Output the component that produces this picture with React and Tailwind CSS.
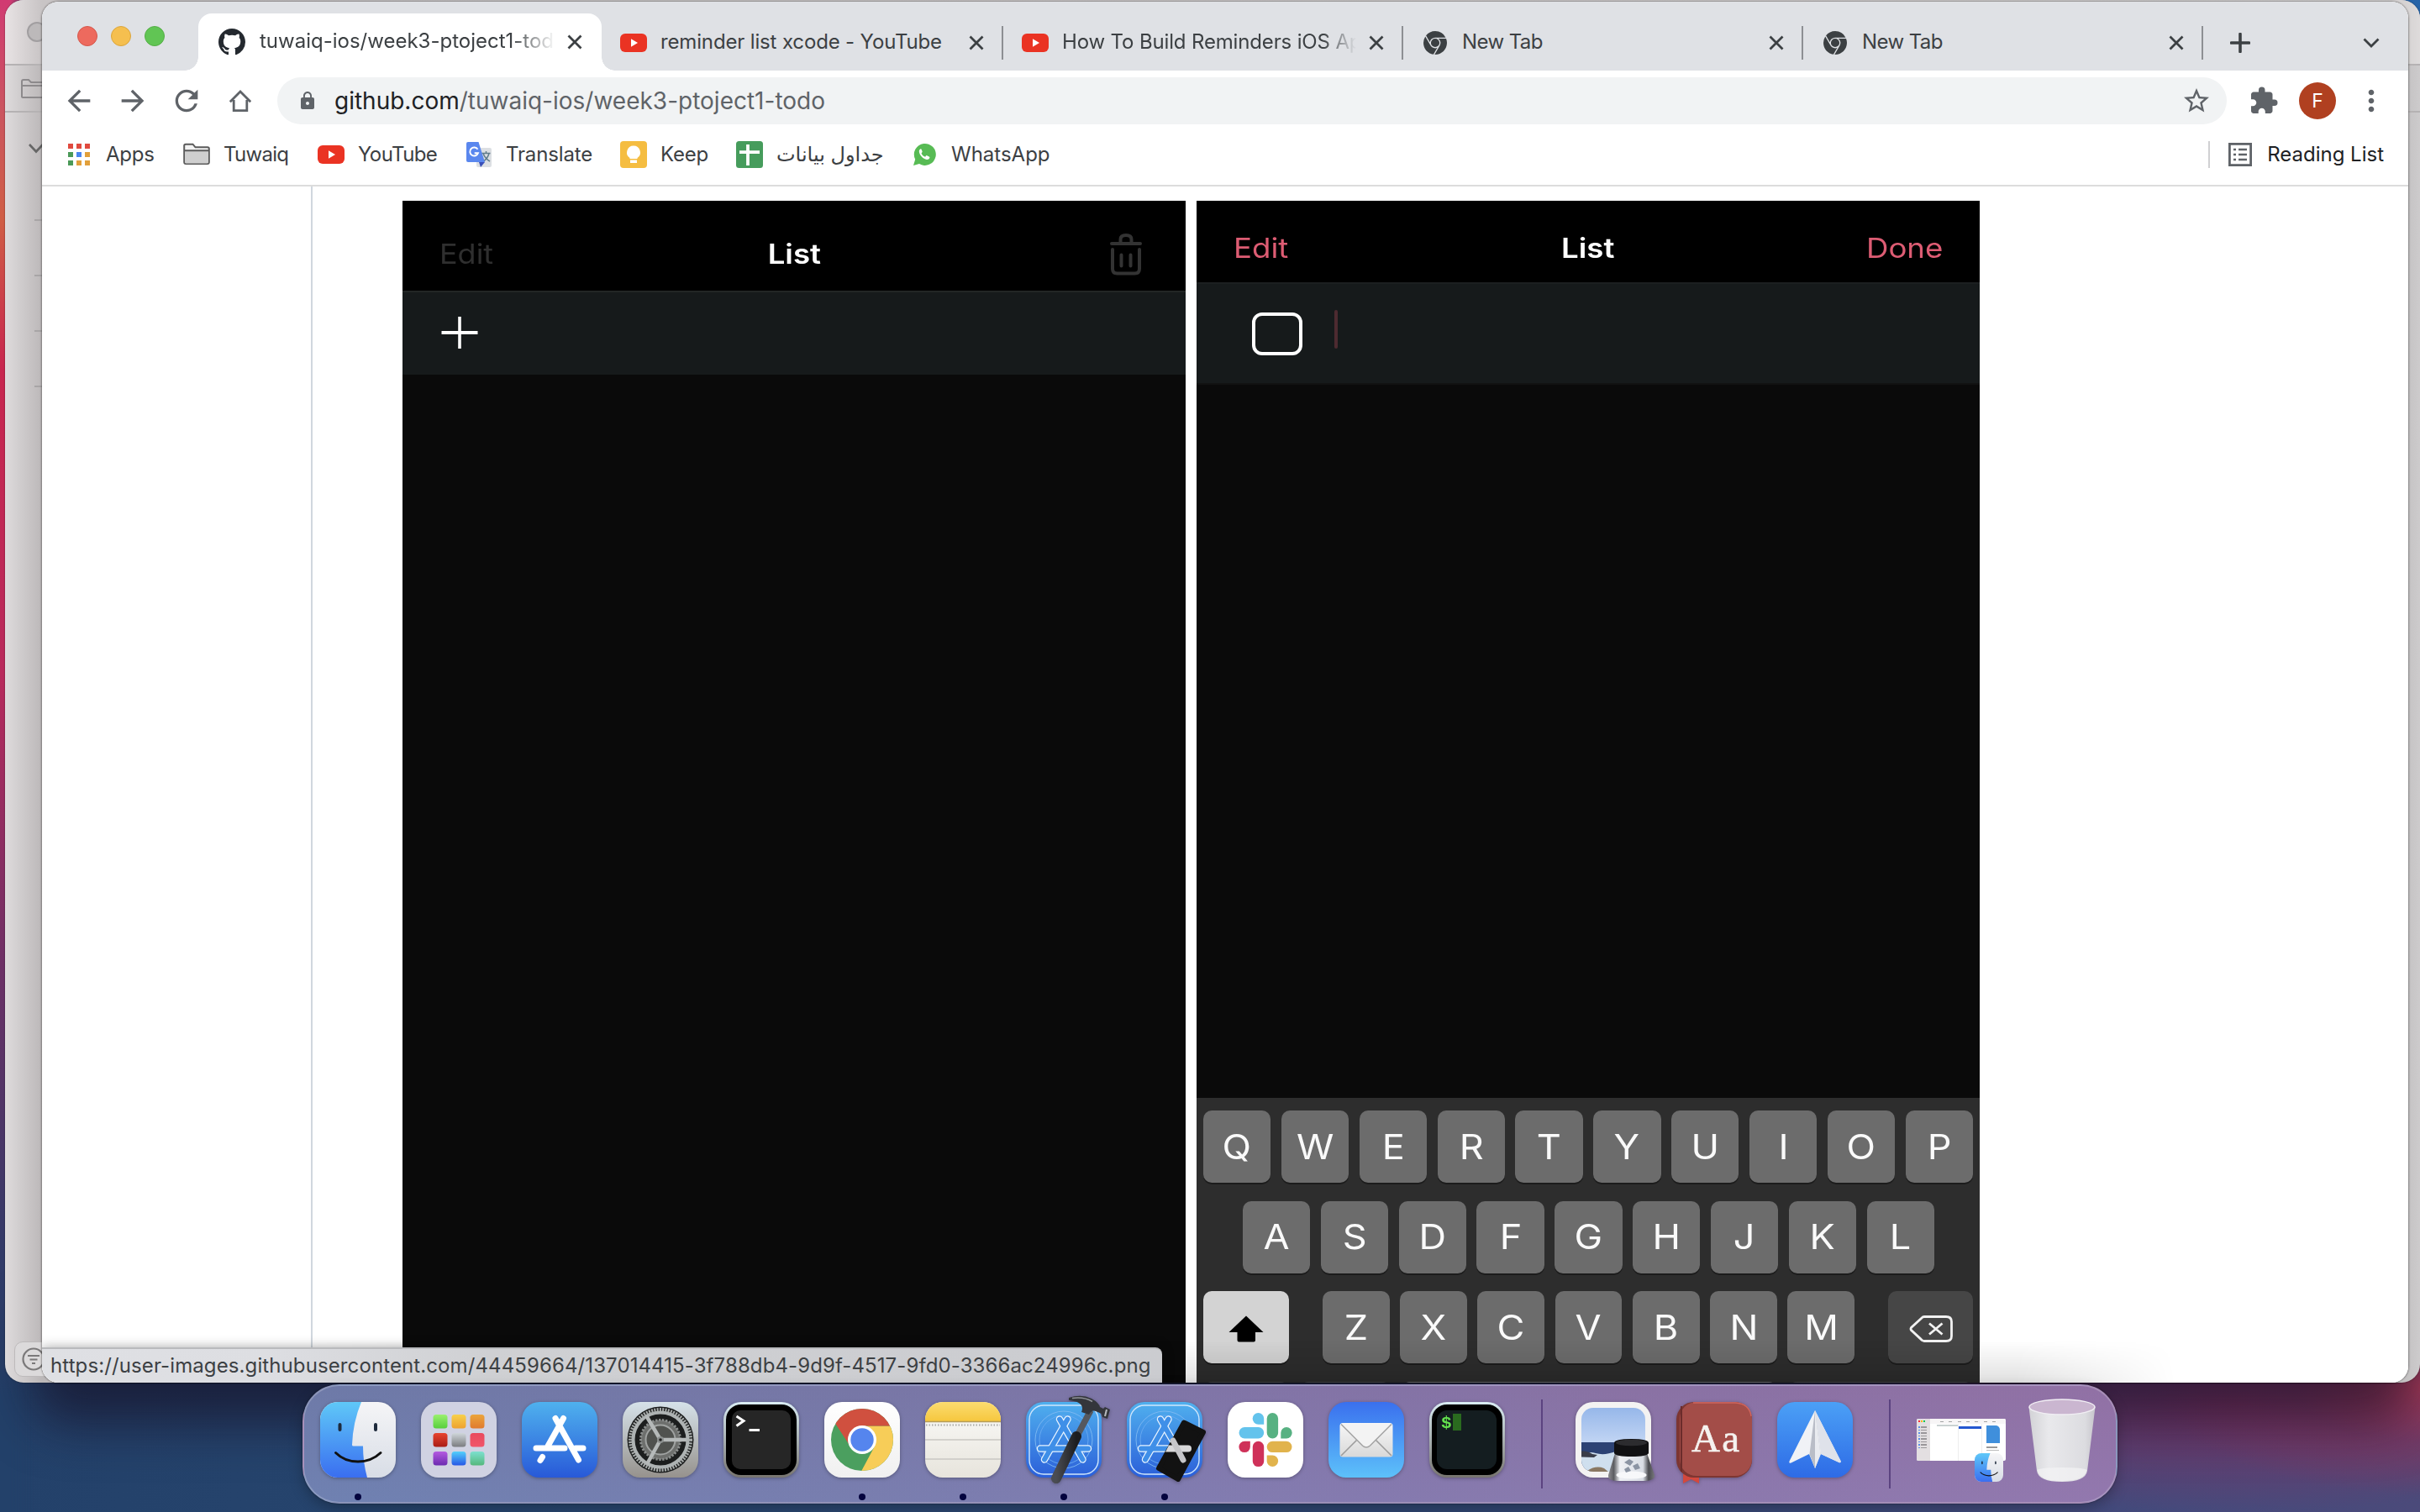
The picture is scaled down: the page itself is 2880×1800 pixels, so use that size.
import React from "react";
import {
  MdArrowBack,
  MdArrowForward,
  MdRefresh,
  MdLock,
  MdStarBorder,
  MdExtension,
  MdMoreVert,
} from "react-icons/md";
import { SiGooglechrome } from "react-icons/si";

/* ---------- small glyphs ---------- */

const GithubMark = () => (
  <svg viewBox="0 0 16 16" className="h-8 w-8" fill="#24292f">
    <path d="M8 0C3.58 0 0 3.58 0 8c0 3.54 2.29 6.53 5.47 7.59.4.07.55-.17.55-.38 0-.19-.01-.82-.01-1.49-2.01.37-2.53-.49-2.69-.94-.09-.23-.48-.94-.82-1.13-.28-.15-.68-.52-.01-.53.63-.01 1.08.58 1.23.82.72 1.21 1.87.87 2.33.66.07-.52.28-.87.51-1.07-1.78-.2-3.64-.89-3.64-3.95 0-.87.31-1.59.82-2.15-.08-.2-.36-1.02.08-2.12 0 0 .67-.21 2.2.82.64-.18 1.32-.27 2-.27.68 0 1.36.09 2 .27 1.53-1.04 2.2-.82 2.2-.82.44 1.1.16 1.92.08 2.12.51.56.82 1.27.82 2.15 0 3.07-1.87 3.75-3.65 3.95.29.25.54.73.54 1.48 0 1.07-.01 1.93-.01 2.2 0 .21.15.46.55.38A8.013 8.013 0 0016 8c0-4.42-3.58-8-8-8z" />
  </svg>
);

const YouTubeMark = () => (
  <svg viewBox="0 0 32 32" className="h-8 w-8">
    <rect y="5" width="32" height="22" rx="6" fill="#ea3323" />
    <path d="M13 11.3v9.4l8-4.7z" fill="#fff" />
  </svg>
);

const CloseGlyph = () => (
  <svg viewBox="0 0 18 18" className="h-[18px] w-[18px]" stroke="#3c4043" strokeWidth="2.800">
    <path d="M1.500 1.500l15 15M16.500 1.500l-15 15" />
  </svg>
);

const HomeGlyph = () => (
  <svg viewBox="0 0 28 28" className="h-7 w-7" fill="none" stroke="#5f6368" strokeWidth="2.800">
    <path d="M1.800 15.200L14 3l12.200 12.200M6.200 13v12.600h15.600V13" />
  </svg>
);

const AppsGlyph = () => (
  <svg viewBox="0 0 26 26" className="h-[26px] w-[26px]">
    {[
      ["#e04a3f", "#e04a3f", "#e04a3f"],
      ["#4b9a58", "#4a86f0", "#e2a03b"],
      ["#4b9a58", "#e2a03b", "#e2a03b"],
    ].map((row, r) =>
      row.map((c, i) => <rect key={`${r}${i}`} x={i * 10} y={r * 10} width="6" height="6" fill={c} />)
    )}
  </svg>
);

const FolderGlyph = () => (
  <svg viewBox="0 0 32 32" className="h-8 w-8">
    <path d="M1.200 25V5.500q0-1.800 1.800-1.800h8.500l3 3.600H29q1.800 0 1.800 1.800V25q0 2-2 2H3.200q-2 0-2-2z" fill="#f3f3f3" stroke="#5b5b5b" strokeWidth="2" />
    <path d="M2 12h28v13q0 1.400-1.400 1.400H3.400Q2 26.400 2 25z" fill="#cfcfcf" />
    <path d="M1.500 11.200h29" stroke="#5b5b5b" strokeWidth="2" />
  </svg>
);

const TranslateGlyph = () => (
  <svg viewBox="0 0 32 32" className="h-8 w-8">
    <rect x="13" y="8" width="18" height="23" rx="2" fill="#dcdfe3" />
    <path d="M18.500 14.500h11M24.500 12v2.500M28 14.500q-1.500 6.500-8 10.500M21 14.500q2 6 8 9.500" fill="none" stroke="#607d8b" strokeWidth="1.500" />
    <path d="M16 25h7l-5 6z" fill="#3a50b8" />
    <path d="M3 1h12.500L23 25H3Q1 25 1 23V3Q1 1 3 1z" fill="#5a87ee" />
    <path d="M14.500 9.800A5 5 0 1 0 15 14.200h-4.300" fill="none" stroke="#fff" strokeWidth="1.900" />
  </svg>
);

const KeepGlyph = () => (
  <svg viewBox="0 0 32 32" className="h-8 w-8">
    <rect width="32" height="32" rx="4" fill="#f5bd41" />
    <path d="M16 5.500a8 8 0 0 0-4.500 14.600v0.900h9v-0.900A8 8 0 0 0 16 5.500z" fill="#fff" />
    <rect x="12" y="22.500" width="8" height="3.500" fill="#fff" />
  </svg>
);

const SheetGlyph = () => (
  <svg viewBox="0 0 32 32" className="h-8 w-8">
    <rect width="32" height="32" rx="3.500" fill="#469c5c" />
    <path d="M4 13.200h24M14 4v25" stroke="#fff" strokeWidth="3.800" />
  </svg>
);

const WhatsAppGlyph = () => (
  <svg viewBox="0 0 32 32" className="h-8 w-8">
    <path d="M3 29l2.200-7.200A13 13 0 1 1 10 27z" fill="#57bb54" />
    <path d="M11.300 9.500c-1 .6-1.700 1.900-1.400 3.400 1 4.600 4.600 8 9 9 1.500.2 3-.6 3.400-1.900.2-.8.1-1.300-.6-1.600l-2.500-1.200c-.5-.2-.9 0-1.200.4l-.9 1.100c-2.200-.8-3.600-2.200-4.600-4.300l.9-1.200c.3-.4.3-.7.1-1.200l-1-2.300c-.2-.4-.8-.5-1.200-.2z" fill="#fff" />
  </svg>
);

const ReadingGlyph = () => (
  <svg viewBox="0 0 28 28" className="h-7 w-7" fill="none" stroke="#5f6368">
    <rect x="1.400" y="1.400" width="25.200" height="25.200" strokeWidth="2.800" />
    <path d="M6 8h3M6 14h3M6 20h3M12 8h10M12 14h10M12 20h10" strokeWidth="2.600" />
  </svg>
);

/* ---------- browser chrome ---------- */

function Tab({ icon, title, fade, first }) {
  return (
    <div className={"flex h-10 items-center border-r-2 border-[#8d8f93] pl-[22px] " + (first ? "w-[478px]" : "w-[476px]")}>
      <span className="flex w-8 shrink-0 justify-center">{icon}</span>
      <span className={"relative -top-px ml-4 w-[350px] shrink-0 overflow-hidden whitespace-nowrap " + (fade ? "tracking-[-0.15px] [mask-image:linear-gradient(90deg,#000_310px,transparent_350px)]" : "tracking-[-0.150px]")}>
        {title}
      </span>
      <span className={first ? "ml-[17px]" : "ml-[15px]"}>
        <CloseGlyph />
      </span>
    </div>
  );
}

function TabStrip() {
  return (
    <div className="flex h-[82px] items-end bg-[#dfe1e5] pl-[42px] text-[24px] text-[#3c4043]">
      <div className="mb-[29px] flex w-[144px] gap-4">
        <span className="h-6 w-6 rounded-full border border-[#d5574b] bg-[#ed6a5e]" />
        <span className="h-6 w-6 rounded-full border border-[#dba53c] bg-[#f5bf4f]" />
        <span className="h-6 w-6 rounded-full border border-[#54ae45] bg-[#61c554]" />
      </div>
      <div className="relative flex h-[68px] w-[480px] items-center rounded-t-[16px] bg-white pl-6">
        <span className="absolute bottom-0 left-[-16px] h-4 w-4 bg-[radial-gradient(circle_at_0_0,transparent_15.5px,white_16px)]" />
        <span className="absolute bottom-0 right-[-16px] h-4 w-4 bg-[radial-gradient(circle_at_100%_0,transparent_15.5px,white_16px)]" />
        <GithubMark />
        <span className="relative -top-px ml-[17px] w-[349px] overflow-hidden whitespace-nowrap [mask-image:linear-gradient(90deg,#000_300px,transparent_352px)]">
          tuwaiq-ios/week3-ptoject1-todo
        </span>
        <span className="ml-[17px]">
          <CloseGlyph />
        </span>
      </div>
      <div className="mb-[13px] flex items-center">
        <Tab first icon={<YouTubeMark />} title="reminder list xcode - YouTube" />
        <Tab fade icon={<YouTubeMark />} title="How To Build Reminders iOS App" />
        <Tab icon={<SiGooglechrome size={28} color="#3c4043" />} title={<span className="tracking-[-0.6px]">New Tab</span>} />
        <Tab icon={<SiGooglechrome size={28} color="#3c4043" />} title={<span className="tracking-[-0.6px]">New Tab</span>} />
        <svg viewBox="0 0 24 24" className="ml-8 h-6 w-6" stroke="#3c4043" strokeWidth="3.600" strokeLinecap="round">
          <path d="M12 1.500v21M1.500 12h21" />
        </svg>
        <svg viewBox="0 0 20 12" className="ml-[134px] h-3 w-5" fill="none" stroke="#3c4043" strokeWidth="2.800">
          <path d="M1.500 1.500L10 10l8.500-8.500" />
        </svg>
      </div>
    </div>
  );
}

function Toolbar() {
  return (
    <div className="flex h-[72px] items-center bg-white pl-6 text-[#5f6368]">
      <div className="flex items-center gap-6">
        <MdArrowBack size={40} />
        <MdArrowForward size={40} />
        <MdRefresh size={40} />
        <span className="flex w-10 justify-center"><HomeGlyph /></span>
      </div>
      <div className="ml-6 flex h-14 w-[2320px] items-center rounded-full bg-[#f1f3f4] pl-6 pr-[18px]">
        <MdLock size={24} />
        <span className="ml-5 flex-1 text-[28px] text-[#5f6368]">
          <span className="text-[#202124]">github.com</span>/tuwaiq-ios/week3-ptoject1-todo
        </span>
        <MdStarBorder size={36} />
      </div>
      <div className="ml-[26px] flex items-center">
        <MdExtension size={36} />
        <span className="ml-6 flex h-11 w-11 items-center justify-center rounded-full bg-[#b04020] text-[23px] text-white">F</span>
        <MdMoreVert size={40} className="ml-[22px]" />
      </div>
    </div>
  );
}

function Bookmark({ icon, children, className }) {
  return (
    <div className="flex items-center gap-4">
      <span className="flex w-8 justify-center">{icon}</span>
      <span className={"whitespace-nowrap " + className}>{children}</span>
    </div>
  );
}

function BookmarksBar() {
  return (
    <div className="flex h-[66px] items-center border-b-2 border-[#dcdcdc] bg-white pb-2 pl-7 text-[24px] text-[#3c4043]">
      <Bookmark icon={<AppsGlyph />} className="w-[92px] tracking-[-0.2px]">Apps</Bookmark>
      <Bookmark icon={<FolderGlyph />} className="w-[112px] tracking-[-0.7px]">Tuwaiq</Bookmark>
      <Bookmark icon={<YouTubeMark />} className="w-[128px] tracking-[-0.6px]">YouTube</Bookmark>
      <Bookmark icon={<TranslateGlyph />} className="w-[136px] tracking-[-0.15px]">Translate</Bookmark>
      <Bookmark icon={<KeepGlyph />} className="w-[90px] tracking-[-0.2px]">Keep</Bookmark>
      <Bookmark icon={<SheetGlyph />} className="w-[160px]">جداول بيانات</Bookmark>
      <Bookmark icon={<WhatsAppGlyph />} className="w-[120px]">WhatsApp</Bookmark>
      <div className="ml-auto mr-[29px] flex items-center text-[#202124]">
        <span className="mr-[22px] h-8 w-0.5 bg-[#d0d0d2]" />
        <ReadingGlyph />
        <span className="ml-[18px] whitespace-nowrap">Reading List</span>
      </div>
    </div>
  );
}

/* ---------- page contents ---------- */

function Key({ children }) {
  return (
    <span className="flex h-[86px] flex-1 items-center justify-center rounded-[10px] bg-[#6c6c6c] pt-px text-[41px] text-[#fafafa] shadow-[0_2px_0_#1c1c1c]">
      <span className="scale-x-110">{children}</span>
    </span>
  );
}

function Keyboard() {
  return (
    <div className="flex h-[339px] flex-col overflow-hidden bg-[#2d2d2d] px-[8px] pt-[15px]">
      <div className="flex gap-[12.5px]">
        {"QWERTYUIOP".split("").map((k) => <Key key={k}>{k}</Key>)}
      </div>
      <div className="mt-[21.500px] flex gap-[12.5px] pl-[47px] pr-[46px]">
        {"ASDFGHJKL".split("").map((k) => <Key key={k}>{k}</Key>)}
      </div>
      <div className="mt-[21.5px] flex">
        <span className="flex h-[86px] w-[102px] items-center justify-center rounded-[10px] bg-[#d3d3d3] shadow-[0_2px_0_#1c1c1c]">
          <svg viewBox="0 0 44 32" className="mt-1 h-8 w-11">
            <path d="M22 0.500L42.500 20H33v9.500q0 2-2 2H13.500q-2 0-2-2V20H1.500z" fill="#000" />
          </svg>
        </span>
        <div className="mx-[40px] flex flex-1 gap-[12.5px]">
          {"ZXCVBNM".split("").map((k) => <Key key={k}>{k}</Key>)}
        </div>
        <span className="flex h-[86px] w-[101px] items-center justify-center rounded-[10px] bg-[#464646] shadow-[0_2px_0_#1c1c1c]">
          <svg viewBox="0 0 52 32" className="mt-1 h-8 w-[52px]" fill="none" stroke="#f2f2f2" strokeWidth="2.800">
            <path d="M18 1.500h26q6.500 0 6.500 6v17q0 6-6.500 6H18q-1.800 0-3-1.400L2.500 17.500q-1-1.500 0-3L15 3q1.200-1.500 3-1.500z" />
            <path d="M24 9.500l15.500 13M39.500 9.500L24 22.500" />
          </svg>
        </span>
      </div>
      <div className="mt-[21.5px] flex gap-[13px]">
        <span className="h-20 w-[102px] rounded-[10px] bg-[#464646]" />
        <span className="h-20 w-[108px] rounded-[10px] bg-[#464646]" />
        <span className="h-20 w-[447px] rounded-[10px] bg-[#6c6c6c]" />
        <span className="h-20 flex-1 rounded-[10px] bg-[#464646]" />
      </div>
    </div>
  );
}

function EmptyListShot() {
  return (
    <div className="flex h-[1407px] w-[932px] flex-col bg-[#0a0a0a]">
      <div className="grid h-[107px] grid-cols-3 items-center bg-black pl-11 pr-[52px] pt-[20px] text-[33px]">
        <span className="origin-left scale-x-[1.09] text-[#2f2f2f]">Edit</span>
        <span className="ml-2 scale-x-[1.11] text-center font-semibold text-white">List</span>
        <svg viewBox="0 0 38 50" className="h-[50px] w-[38px] justify-self-end" fill="none" stroke="#333" strokeWidth="4" strokeLinecap="round">
          <path d="M2 12h34M12.500 11V7q0-5 6.500-5t6.500 5v4M3 19v23q0 5.500 5.500 5.500h21q5.500 0 5.500-5.500V19M13.500 25.500v13M24.500 25.500v13" />
        </svg>
      </div>
      <div className="flex h-[100px] items-center border-t-2 border-[#222625] bg-[#161a1b] pb-[2px] pl-[46px]">
        <svg viewBox="0 0 44 40" className="h-10 w-11" stroke="#fff">
          <path d="M22 1v38" strokeWidth="3.600" />
          <path d="M0.500 20h43" strokeWidth="4" />
        </svg>
      </div>
    </div>
  );
}

function EditingShot() {
  return (
    <div className="flex h-[1407px] w-[932px] flex-col bg-[#0a0a0a]">
      <div className="grid h-[97px] grid-cols-3 items-center bg-black px-11 pt-[17px] text-[33px] text-[#dd5c73]">
        <span className="origin-left scale-x-[1.11]">Edit</span>
        <span className="scale-x-[1.11] text-center font-semibold text-white">List</span>
        <span className="origin-right scale-x-[1.11] text-right">Done</span>
      </div>
      <div className="flex h-[120px] items-center border-t-2 border-[#1c1f20] bg-[#161a1b] pl-[66px]">
        <span className="h-[51px] w-[60px] rounded-[12px] border-[4.5px] border-white" />
        <span className="mb-[10px] ml-[38px] h-[46px] w-1 rounded bg-[#4d2a30]" />
      </div>
      <div className="flex-1 border-t-2 border-[#121212]" />
      <Keyboard />
    </div>
  );
}

function ChromeWindow() {
  return (
    <div className="absolute left-[50px] top-[2px] flex h-[1644px] w-[2816px] flex-col overflow-hidden rounded-[20px] bg-white">
      <TabStrip />
      <Toolbar />
      <BookmarksBar />
      <div className="flex flex-1 overflow-hidden bg-white">
        <div className="w-[322px] shrink-0 border-r-2 border-[#d0d7de]" />
        <div className="ml-[107px] mt-[17px] flex gap-[13px]">
          <EmptyListShot />
          <EditingShot />
        </div>
      </div>
      <div className="absolute bottom-0 left-[309px] h-[50px] w-[2230px] bg-[linear-gradient(0deg,rgba(0,0,0,0.12),transparent)] [mask-image:linear-gradient(90deg,transparent,#000_120px,#000_2040px,transparent)]" />
      <div className="absolute bottom-0 left-0 flex h-[42px] w-[1333px] items-center rounded-tr-[8px] border-t-2 border-[#b9babd] bg-[linear-gradient(90deg,#dfe0e4,#dddee2_20%,#cfd0d3_40%,#cbccd0)] pl-[10px] text-[24px] tracking-[0.105px] text-[#3c4043] shadow-[0_0_14px_rgba(0,0,0,0.35)]">
        https://user-images.githubusercontent.com/44459664/137014415-3f788db4-9d9f-4517-9fd0-3366ac24996c.png
      </div>
    </div>
  );
}

/* Finder-like window peeking out from behind the browser */
function BackWindow() {
  return (
    <div className="absolute left-[6px] top-0 h-[1646px] w-[2874px] overflow-hidden rounded-[22px] bg-[linear-gradient(90deg,#dedbdc_0px,#bcb8b9_44px,#c4c2c3_2858px,#cdcbcc)] shadow-[0_0_2px_rgba(0,0,0,0.5)]">
      <div className="h-[78px] border-b-2 border-[#b5b2b3] bg-[linear-gradient(90deg,#e8e3e4,#c8c4c5_44px,#d6d3d3_2858px,#dedbdb)] pl-[26px] pt-[26px]">
        <div className="h-6 w-6 rounded-full border-2 border-[#a19ea0] bg-[#bcb9ba]" />
      </div>
      <div className="h-[56px] border-b-2 border-[#b5b2b3] pl-[19px] pt-[16px]">
        <svg viewBox="0 0 32 24" className="h-6 w-8" fill="none" stroke="#8d8a8c" strokeWidth="2">
          <path d="M1 21V3q0-2 2-2h6l3 3h19v18H3q-2 0-2-1zM1 8h30" />
        </svg>
      </div>
      <div className="pl-[28px] pt-[37px]">
        <svg viewBox="0 0 18 12" className="h-3 w-[18px]" fill="none" stroke="#666" strokeWidth="2.600">
          <path d="M1 1l8 8.500L17 1" />
        </svg>
      </div>
      <div className="mt-[78px] flex flex-col gap-16 pl-[35px]">
        {[0, 1, 2, 3].map((i) => <span key={i} className="h-0.5 w-3 bg-[#a8a5a6]" />)}
      </div>
      <div className="absolute bottom-[7px] left-[11px] flex h-[42px] w-20 items-center rounded-[10px] border border-[#bdbabb] bg-[#dcdadb] pl-[8px]">
        <svg viewBox="0 0 28 28" className="h-7 w-7" fill="none" stroke="#7b797a" strokeWidth="2.200">
          <circle cx="14" cy="14" r="12.500" />
          <path d="M7 10h14M9.500 14.500h9M12 19h4" />
        </svg>
      </div>
    </div>
  );
}

/* ---------- dock ---------- */

const Squircle = ({ fill, ...rest }) => <rect width="90" height="90" rx="21" fill={fill} {...rest} />;

const Icon = ({ children }) => (
  <svg viewBox="0 0 90 90" className="h-[90px] w-[90px] overflow-visible drop-shadow-[0_1px_2px_rgba(0,0,0,0.3)]">{children}</svg>
);

const Grad = ({ id, from, to }) => (
  <linearGradient id={id} x1="0" y1="0" x2="0" y2="1">
    <stop offset="0" stopColor={from} />
    <stop offset="1" stopColor={to} />
  </linearGradient>
);

const FinderArt = ({ id }) => (
  <>
    <defs>
      <Grad id={id + "a"} from="#5fc8f8" to="#3a6ef0" />
      <Grad id={id + "b"} from="#f5f5f7" to="#d8dde6" />
      <clipPath id={id + "c"}><rect width="90" height="90" rx="21" /></clipPath>
    </defs>
    <g clipPath={`url(#${id}c)`}>
      <rect width="90" height="90" fill={`url(#${id}b)`} />
      <path d="M0 0h49Q39 24 38 51q0 1.500 1.500 1.500H51Q51 72 56 90H0z" fill={`url(#${id}a)`} />
    </g>
    <path d="M23.500 27v6M66 27v6" stroke="#1e2a3c" strokeWidth="4" strokeLinecap="round" />
    <path d="M18.500 60.500Q29 71 45 71T72 60.500" fill="none" stroke="#111" strokeWidth="3" strokeLinecap="round" />
  </>
);

const FinderIcon = () => <Icon><FinderArt id="fi" /></Icon>;

const LaunchpadIcon = () => {
  const tiles = [
    ["#9af06f", "#57cf3c"], ["#f7d04b", "#eea22f"], ["#eba53c", "#e07a2e"],
    ["#e8442f", "#a91d16"], ["#cfd6da", "#7b7d80"], ["#e94a5e", "#f0566a"],
    ["#b45be0", "#6c2bb0"], ["#53d0fb", "#2657e6"], ["#7de0cf", "#55b87c"],
  ];
  return (
    <Icon>
      <defs>{tiles.map(([a, b], i) => <Grad key={i} id={"lp" + i} from={a} to={b} />)}</defs>
      <Squircle fill="#d0d2e2" />
      {tiles.map((_, i) => (
        <rect key={i} x={14.5 + (i % 3) * 22} y={15 + Math.floor(i / 3) * 22} width="17" height="16.500" rx="3.500" fill={`url(#lp${i})`} />
      ))}
    </Icon>
  );
};

const AppStoreIcon = () => (
  <Icon>
    <defs><Grad id="as" from="#4fb1ee" to="#2859d8" /></defs>
    <Squircle fill="url(#as)" />
    <g stroke="#fff" strokeWidth="7" strokeLinecap="round">
      <path d="M49.500 19.500L31 52.500M24.500 65.500l-2.500 4M40 19.500L67.500 69M17 55h34M64 55h9" />
    </g>
  </Icon>
);

const SettingsIcon = () => (
  <Icon>
    <defs><Grad id="se" from="#d6e2e9" to="#96928d" /></defs>
    <Squircle fill="url(#se)" />
    <circle cx="45" cy="45" r="39.500" fill="#1c1e1e" />
    <circle cx="45" cy="45" r="36" fill="none" stroke="#a6aaa9" strokeWidth="4" strokeDasharray="2 1.300" />
    <circle cx="45" cy="45" r="32.500" fill="none" stroke="#aeb3b3" strokeWidth="4" />
    <circle cx="45" cy="45" r="23.500" fill="#6d6f6d" stroke="#8b8e8d" strokeWidth="3" strokeDasharray="2.400 1.600" />
    <circle cx="45" cy="45" r="17.500" fill="#50524f" stroke="#a0a3a2" strokeWidth="2" />
    <path d="M45 45h31M45 45L28.500 17M45 45L29 74" stroke="#b5b9b9" strokeWidth="4.500" />
    <circle cx="45" cy="45" r="4" fill="#8d9190" />
    <circle cx="45" cy="45" r="1.800" fill="#222" />
  </Icon>
);

const TerminalIcon = () => (
  <Icon>
    <defs><Grad id="te" from="#d9ecf3" to="#77746f" /></defs>
    <Squircle fill="url(#te)" />
    <rect x="3" y="3" width="84" height="84" rx="18" fill="#000" />
    <rect x="10" y="10" width="70" height="70" rx="10" fill="#262626" />
    <path d="M15.500 17l8.500 5.500-8.500 6" fill="none" stroke="#fff" strokeWidth="3" />
    <path d="M30.500 33.500H43" stroke="#fff" strokeWidth="3" />
  </Icon>
);

const ChromeIcon = () => (
  <Icon>
    <defs>
      <clipPath id="chc"><circle cx="45" cy="45" r="37" /></clipPath>
      <Grad id="chb" from="#ffffff" to="#f0f0f0" />
    </defs>
    <Squircle fill="url(#chb)" />
    <g clipPath="url(#chc)">
      <rect width="90" height="90" fill="#4b9f5f" />
      <path d="M45 28.500H90V90H40L59.500 53.500z" fill="#f7cd58" />
      <path d="M0 0h90v28.500H45L29 50 12 24z" fill="#d0503f" />
    </g>
    <circle cx="45" cy="45" r="17" fill="#fff" />
    <circle cx="45" cy="45" r="13.700" fill="#5585ee" />
  </Icon>
);

const NotesIcon = () => (
  <Icon>
    <defs>
      <clipPath id="noc"><rect width="90" height="90" rx="21" /></clipPath>
      <Grad id="noy" from="#fbdc70" to="#f6c73e" />
      <Grad id="now" from="#fbfbf9" to="#e7e4dc" />
    </defs>
    <g clipPath="url(#noc)">
      <rect width="90" height="90" fill="url(#now)" />
      <rect width="90" height="23" fill="url(#noy)" />
      <path d="M0 23.500h90" stroke="#b59b58" strokeWidth="1.500" />
      <path d="M1 27.500h88" stroke="#a9a9a6" strokeWidth="1.800" strokeDasharray="1.500 2" />
      <path d="M0 45h90M0 68h90" stroke="#c9c8c4" strokeWidth="1.300" />
    </g>
  </Icon>
);

const BlueprintA = () => (
  <>
    <Squircle fill="url(#xc)" />
    <rect x="4" y="4" width="82" height="82" rx="17" fill="none" stroke="#cfe6fb" strokeWidth="1.400" />
    <circle cx="45" cy="45" r="34" fill="none" stroke="#7fbaf2" strokeWidth="0.900" />
    <circle cx="45" cy="45" r="29" fill="none" stroke="#6aaaf0" strokeWidth="0.900" />
    {[["#e9f4ff", 8.5], ["#3f8fe8", 5.9]].map(([c, w]) => (
      <g key={c} stroke={c} strokeWidth={w} strokeLinecap="round">
        <path d="M40 20.500L67.500 68.500M17 55.500h57" />
        <path d="M49.500 20.500L22 68.500" />
      </g>
    ))}
  </>
);

const XcodeIcon = () => (
  <Icon>
    <defs>
      <Grad id="xc" from="#50b0ee" to="#2b5fd9" />
      <linearGradient id="xh" x1="0" y1="0" x2="1" y2="0"><stop offset="0" stopColor="#4a4c52" /><stop offset="1" stopColor="#1c1d20" /></linearGradient>
    </defs>
    <BlueprintA />
    <path d="M77 10L60 42" stroke="#55585e" strokeWidth="7.500" />
    <path d="M60 41L36 91" stroke="url(#xh)" strokeWidth="12" strokeLinecap="round" />
    <path d="M51-5Q66-10 78-4q9 5 10 10l4 2 2-2 6 3-3 11-6-2-1-4-7-3q-5-2-8 4l-9-3Q71 0 51-2z" fill="#34363b" />
    <path d="M55-4.500q14-2 24 4" fill="none" stroke="#8f9298" strokeWidth="1.600" />
    <path d="M96 9l-2 8" fill="none" stroke="#b5b8bd" strokeWidth="2" />
  </Icon>
);

const SimulatorIcon = () => (
  <Icon>
    <BlueprintA />
    <path d="M68 24.500L91 36 61 92 38 79z" fill="#121212" stroke="#121212" strokeWidth="6" strokeLinejoin="round" />
    <path d="M50 51.500h23a4 4 0 0 1 0 8H46z" fill="#d8d8da" />
    <path d="M55 46L67 69" stroke="#c6c6c9" strokeWidth="7" strokeLinecap="round" />
  </Icon>
);

const SlackIcon = () => (
  <Icon>
    <Squircle fill="#fff" />
    <path d="M36.500 13a6.700 6.700 0 0 1 6.700 6.700v7h-6.700a6.700 6.700 0 0 1 0-13.700z" fill="#63c3ec" />
    <rect x="13.500" y="30" width="29.700" height="13.400" rx="6.700" fill="#63c3ec" />
    <rect x="46.700" y="13" width="13.400" height="30.400" rx="6.700" fill="#57b182" />
    <path d="M63.300 43.400v-6.700a6.700 6.700 0 1 1 6.700 6.700z" fill="#57b182" />
    <rect x="46.700" y="46.700" width="29.800" height="13.400" rx="6.700" fill="#e1b34c" />
    <path d="M46.700 63.500h6.700a6.700 6.700 0 1 1-6.700 6.700z" fill="#e1b34c" />
    <rect x="29.800" y="46.700" width="13.400" height="30.400" rx="6.700" fill="#cf3159" />
    <path d="M26.800 46.700v6.700a6.700 6.700 0 1 1-6.700-6.700z" fill="#cf3159" />
  </Icon>
);

const MailIcon = () => (
  <Icon>
    <defs><Grad id="ma" from="#3a70ee" to="#5dc1fa" /><Grad id="mb" from="#f7f7f7" to="#d9d9d9" /></defs>
    <Squircle fill="url(#ma)" />
    <rect x="13.500" y="25" width="63" height="40.500" rx="3.500" fill="url(#mb)" />
    <path d="M15 64L36 43M75 64L54 43" stroke="#9c9c9c" strokeWidth="1.600" />
    <path d="M15 26.500L40.500 52q4.500 4 9 0L75 26.500" fill="#f3f3f3" stroke="#a5a5a5" strokeWidth="1.600" />
  </Icon>
);

const ITermIcon = () => (
  <Icon>
    <defs><Grad id="it" from="#d9ecf3" to="#77746f" /></defs>
    <Squircle fill="url(#it)" />
    <rect x="3" y="3" width="84" height="84" rx="18" fill="#000" />
    <rect x="9" y="10" width="71" height="70" rx="12" fill="#141d20" />
    <text x="14" y="31" fontFamily="Liberation Mono, monospace" fontSize="21" fontWeight="700" fill="#63e04d">$</text>
    <rect x="28" y="14" width="10" height="20" fill="#2a6a1f" />
  </Icon>
);

const PreviewIcon = () => (
  <Icon>
    <defs>
      <Grad id="pv" from="#8fb2e8" to="#c3d6f4" />
      <clipPath id="pvc"><rect x="7" y="7" width="76" height="76" rx="14" /></clipPath>
      <linearGradient id="pvg" x1="0" y1="0" x2="1" y2="0">
        <stop offset="0" stopColor="#8d8d91" /><stop offset="0.120" stopColor="#5c5d61" /><stop offset="0.250" stopColor="#eef0f4" /><stop offset="0.750" stopColor="#d9dde4" /><stop offset="0.870" stopColor="#4a4b4f" /><stop offset="1" stopColor="#77787c" />
      </linearGradient>
    </defs>
    <Squircle fill="#f3f2f2" />
    <g clipPath="url(#pvc)">
      <rect width="90" height="50" fill="url(#pv)" />
      <rect y="48" width="90" height="42" fill="#2c4274" />
      <path d="M0 65q14-7 24-4t24-2v31H0z" fill="#cfdfee" />
      <path d="M0 60q12-4 20 2l6 1-4 3q-12 0-22-1z" fill="#3a3d49" />
      <path d="M14 82q10-7 20-3l6 5v6H12z" fill="#8a7862" />
    </g>
    <path d="M47 61h38l9 26q1 6.500-12 7H50q-12-.5-11-7z" fill="url(#pvg)" />
    <ellipse cx="66.500" cy="87" rx="18" ry="4.500" fill="#f7f8fa" />
    <path d="M58 72l6-4 5 3-4 5zM68 76l6-3 3 6-6 2zM58 80l5-3 3 5-6 2z" fill="#8b94a3" />
    <path d="M46 49q0-5 20.500-5t20.500 5v12q-2 4-20.500 4T46 61z" fill="#111113" />
    <ellipse cx="66.500" cy="48.500" rx="18.500" ry="3.800" fill="#2c2c2f" />
  </Icon>
);

const DictionaryIcon = () => (
  <Icon>
    <path d="M8 86h19v11l-9.500-5L8 97z" fill="#d2483e" />
    <Squircle fill="#7d3632" />
    <rect x="4" y="0" width="86" height="88" rx="20" fill="#a34d48" />
    <path d="M6 5v78" stroke="#6b2c2b" strokeWidth="2" />
    <path d="M20 1h50q17 1 19 16" fill="none" stroke="#d0655d" strokeWidth="1.500" />
    <text x="18" y="59" fontFamily="Liberation Serif, serif" fontSize="47" fill="#f5f2ef" stroke="#f5f2ef" strokeWidth="0.600" textLength="57">Aa</text>
  </Icon>
);

const SparkIcon = () => (
  <Icon>
    <defs><Grad id="sp" from="#4ba0f6" to="#2e6be6" /></defs>
    <Squircle fill="url(#sp)" />
    <path d="M45 10L75.500 70q1 3-2 2L52 62l-7 17-7-17-21.500 10.500q-3 1-2-2z" fill="#f0f2f6" />
    <path d="M45 10L75.500 70q1 3-2 2L52 62l-7-52z" fill="#dfe2ea" />
    <path d="M45 10l-6.500 52L45 79l6.500-17z" fill="#b9bdc7" />
    <path d="M45 10v69l6.500-17z" fill="#e9ebf0" />
  </Icon>
);

const MinimizedWindow = () => (
  <div className="relative ml-[31px] h-[75px] w-[106px]">
    <div className="flex h-[50px] overflow-hidden rounded-[2px] bg-white">
      <div className="flex w-4 flex-col bg-[#e3dfe1] px-[2px] pt-[2px]">
        <div className="flex gap-px">
          <span className="h-[2px] w-[2px] bg-red-500" />
          <span className="h-[2px] w-[2px] bg-amber-400" />
          <span className="h-[2px] w-[2px] bg-green-500" />
        </div>
        <div className="mt-[5px] flex flex-col gap-[2px]">
          {[0, 1, 2, 3, 4, 5, 6, 7].map((i) => (
            <div key={i} className="flex gap-px">
              <span className="h-[1.5px] w-[2px] bg-[#5b8fe8]" />
              <span className="h-[1.5px] w-[7px] bg-[#9a979a]" />
            </div>
          ))}
        </div>
      </div>
      <div className="flex-1">
        <div className="flex h-[6px] items-center justify-between bg-[#f7f5f6] px-3">
          {[0, 1, 2, 3, 4, 5, 6].map((i) => <span key={i} className="h-px w-1 bg-[#a5a5a5]" />)}
        </div>
        <div className="flex h-full">
          <div className="w-[34px] border-r border-[#eee] pl-[8px] pt-px"><div className="h-[2px] bg-[#c9d1d1]" /></div>
          <div className="w-[28px] border-r border-[#eee] pt-[3px]"><div className="h-[3px] bg-[#2457d0]" /></div>
          <div className="flex-1 pl-[5px] pt-[2px]">
            <div className="h-[21px] w-[16px] rounded-tr-[5px] bg-[#3f8fdc]" />
            <div className="mt-[4px] h-[1.5px] w-[13px] bg-[#999]" />
            <div className="mt-[2px] h-px w-[15px] bg-[#bbb]" />
          </div>
        </div>
      </div>
    </div>
    <svg viewBox="0 0 90 90" className="absolute bottom-0 right-[3px] h-[34px] w-[34px]"><FinderArt id="fm" /></svg>
  </div>
);

const TrashIcon = () => (
  <svg viewBox="0 0 80 100" className="ml-[27px] h-[100px] w-20">
    <defs>
      <linearGradient id="tr" x1="0" y1="0" x2="1" y2="0">
        <stop offset="0" stopColor="#d2d2d6" /><stop offset="0.300" stopColor="#e9e9ec" /><stop offset="0.850" stopColor="#dcdce0" /><stop offset="1" stopColor="#c6c4cb" />
      </linearGradient>
    </defs>
    <path d="M0.500 10L10 86q2 13 30 13t30-13L79.500 10z" fill="url(#tr)" />
    <path d="M10.500 85q4-3 29.500-3t29.500 3q-2 13-29.500 13T10.500 85z" fill="#f3f3f5" opacity="0.700" />
    <ellipse cx="40" cy="10" rx="39" ry="9" fill="#cab6d0" stroke="#f1eef4" strokeWidth="1.500" />
  </svg>
);

const DockCell = ({ children, running }) => (
  <div className="flex w-[120px] flex-col items-center">
    {children}
    {running && <span className="mt-[19px] h-2 w-2 rounded-full bg-[#04043e]" />}
  </div>
);

const DockRule = ({ className }) => <span className={"-mt-[3px] h-[106px] w-0.5 bg-[#5b4380] " + className} />;

function Dock() {
  return (
    <div className="absolute left-[360px] top-[1648px] flex h-[142px] w-[2160px] items-start rounded-[44px] border-2 border-white/20 bg-[linear-gradient(180deg,rgba(100,80,120,0.12),rgba(110,140,200,0.12)),linear-gradient(90deg,#6f7fae,#7a7cac_30%,#847aad_50%,#8e76aa_72%,#9775ab)] pl-[4px] pt-[19px] shadow-[0_0_2px_rgba(0,0,0,0.5),0_6px_16px_rgba(0,0,0,0.25)]">
      <DockCell running><FinderIcon /></DockCell>
      <DockCell><LaunchpadIcon /></DockCell>
      <DockCell><AppStoreIcon /></DockCell>
      <DockCell><SettingsIcon /></DockCell>
      <DockCell><TerminalIcon /></DockCell>
      <DockCell running><ChromeIcon /></DockCell>
      <DockCell running><NotesIcon /></DockCell>
      <DockCell running><XcodeIcon /></DockCell>
      <DockCell running><SimulatorIcon /></DockCell>
      <DockCell><SlackIcon /></DockCell>
      <DockCell><MailIcon /></DockCell>
      <DockCell><ITermIcon /></DockCell>
      <DockRule className="ml-7 mr-6" />
      <DockCell><PreviewIcon /></DockCell>
      <DockCell><DictionaryIcon /></DockCell>
      <DockCell><SparkIcon /></DockCell>
      <DockRule className="ml-7" />
      <div className="mt-5"><MinimizedWindow /></div>
      <div className="-mt-1"><TrashIcon /></div>
    </div>
  );
}

export default function App() {
  return (
    <div className="relative h-[1800px] w-[2880px] overflow-hidden bg-[radial-gradient(ellipse_320px_130px_at_2890px_1650px,#a83a58,rgba(130,55,95,0.6)_50%,transparent),radial-gradient(ellipse_500px_130px_at_2660px_1670px,rgba(125,50,100,0.9),transparent),linear-gradient(90deg,#23416a,#28466f_25%,#2f4570_60%,#454a7c_90%,#4b4a7a)] font-['Inter','Noto_Sans','DejaVu_Sans',sans-serif]">
      <div className="absolute left-0 top-0 h-[1800px] w-10 bg-[linear-gradient(180deg,#d13a72_0px,#cb5560_130px,#d05e45_260px,#c8264f_440px,#b92a5c_800px,#6d3066_1150px,#343a68_1480px,#23416a_1660px)] [mask-image:linear-gradient(90deg,#000_12px,transparent)]" />
      <div className="absolute right-0 top-0 h-10 w-10 bg-[#2764a8]" />
      <div className="absolute left-[60px] top-[1560px] h-[86px] w-[2790px] rounded-[20px] shadow-[0_24px_60px_24px_rgba(20,10,30,0.6)]" />
      <BackWindow />
      <div className="absolute left-[50px] top-[2px] h-[1644px] w-[2816px] rounded-[20px] shadow-[0_0_2px_1px_rgba(0,0,0,0.35)]" />
      <ChromeWindow />
      <Dock />
    </div>
  );
}
